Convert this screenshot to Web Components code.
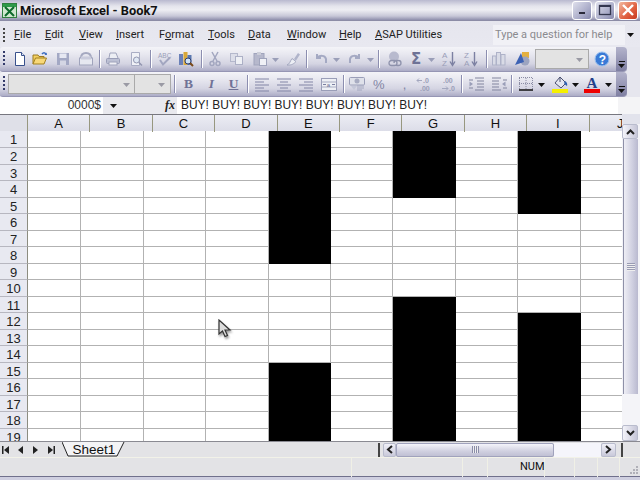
<!DOCTYPE html>
<html><head><meta charset="utf-8"><title>Excel</title>
<style>
html,body{margin:0;padding:0;background:#e6e6ee;}
body{width:640px;height:480px;overflow:hidden;font-family:"Liberation Sans",Arial,sans-serif;display:flex;flex-direction:column;}
</style></head><body>
<xl-title></xl-title>
<xl-menu></xl-menu>
<xl-toolbar set="one"></xl-toolbar>
<xl-toolbar set="two"></xl-toolbar>
<xl-formula></xl-formula>
<xl-sheet></xl-sheet>
<xl-tabs></xl-tabs>
<xl-status></xl-status>
<script>
const ICONS={
new:'<path d="M3.5 1.5h6l3 3v10h-9z" fill="#fff" stroke="#38508c"/><path d="M9.5 1.5v3h3" fill="#dfe6f6" stroke="#38508c"/>',
open:'<path d="M1 13V4h5l1 1.500h5v2" fill="#f3d063" stroke="#9c7a20"/><path d="M1 13l2.500-6h11L12 13z" fill="#f8d878" stroke="#a2801f"/><path d="M10 3q2-2.500 4 0" fill="none" stroke="#3c6cc0" stroke-width="1.500"/><path d="M12.500 4l2.500 0-.5-2.500z" fill="#3c6cc0"/>',
save:'<rect x="2" y="2" width="12" height="12" fill="#a3a8c4"/><rect x="4.500" y="2.500" width="7" height="4.500" fill="#e6e8f2"/><rect x="5" y="9.500" width="6" height="4.500" fill="#d4d6e4"/>',
perm:'<path d="M3 7q0-5 5-5t5 5" fill="none" stroke="#a4a8c0" stroke-width="2"/><rect x="1.500" y="7" width="13" height="7" fill="#e6e8f0" stroke="#a0a4bc"/><rect x="3" y="5.500" width="10" height="3" fill="#c9cbdc"/>',
print:'<path d="M4 7l1-5h6l2 5" fill="#eceef4" stroke="#a0a4bc"/><rect x="1.500" y="7.500" width="13" height="5" rx="1" fill="#bcc0d4" stroke="#9a9eb8"/><rect x="4" y="11" width="8" height="3" fill="#f0f0f5" stroke="#a0a4bc"/>',
prev:'<path d="M3.500 1.500h8v13h-8z" fill="#f0f1f6" stroke="#a9adc4"/><circle cx="8.500" cy="9" r="3" fill="#e0e8f4" stroke="#9296b0"/><path d="M11 11.500l3 3" stroke="#9296b0" stroke-width="1.500"/>',
spell:'<text x="1" y="7" font-size="6.500" font-family="Liberation Sans" fill="#9a9eb8">ABC</text><path d="M3 9l3 4.500 7-7" fill="none" stroke="#a2a6c0" stroke-width="2"/>',
res:'<rect x="1" y="3" width="4" height="11" fill="#6a80b8"/><rect x="5.500" y="1" width="4" height="13" fill="#d8a838"/><rect x="9.500" y="4" width="4" height="10" fill="#5a78b0"/><circle cx="10" cy="10" r="3" fill="#cfe2f4" stroke="#2c3e72"/><path d="M12 12l3 3" stroke="#7a4a18" stroke-width="2"/>',
cut:'<path d="M5 1l5 9M11 1L6 10" stroke="#a2a6bf" stroke-width="1.500"/><circle cx="5" cy="12.500" r="2" fill="none" stroke="#a2a6bf" stroke-width="1.500"/><circle cx="11" cy="12.500" r="2" fill="none" stroke="#a2a6bf" stroke-width="1.500"/>',
copy:'<rect x="1.500" y="2.500" width="7" height="8" fill="#dcdee9" stroke="#b4b8cc"/><rect x="6.500" y="5.500" width="7" height="8" fill="#eef0f5" stroke="#acb0c6"/>',
paste:'<rect x="2" y="2.500" width="10" height="11.500" fill="#b6b8cc" stroke="#a0a4bc"/><rect x="5" y="1" width="4" height="3" fill="#ccced9"/><rect x="7.500" y="7.500" width="7" height="7" fill="#f0f1f6" stroke="#a0a4bc"/>',
paint:'<path d="M9 8l4-6 2 1.500-4 6z" fill="#b0b4ca"/><path d="M2 14c3-1 3-4 5-6.500l4 3c-2 2-4 4-9 3.500z" fill="#eceef4" stroke="#a4a8c0"/>',
undo:'<path d="M4 3v4h4M4 7c3-3 8-3 9 1v4" fill="none" stroke="#a4a9c3" stroke-width="2"/>',
redo:'<path d="M12 3v4H8M12 7C9 4 4 4 3 8v4" fill="none" stroke="#a4a9c3" stroke-width="2"/>',
link:'<circle cx="8" cy="5.500" r="5" fill="#b8bace"/><path d="M3 12a2.500 2.500 0 0 1 2.500-2.500h3a2.500 2.500 0 0 1 0 5h-3A2.500 2.500 0 0 1 3 12zM8 12a2.500 2.500 0 0 1 2.500-2.500h2a2.500 2.500 0 0 1 0 5h-2" fill="none" stroke="#8e92ac" stroke-width="1.300"/>',
sigma:'<text x="3" y="13" font-size="15" font-weight="bold" font-family="DejaVu Sans" fill="#6e7296">Σ</text>',
az:'<text x="1" y="7" font-size="8" font-family="Liberation Sans" fill="#9a9eb8">A</text><text x="1" y="15" font-size="8" font-family="Liberation Sans" fill="#9a9eb8">Z</text><path d="M11.500 1v12M9 10.500l2.500 4 2.500-4" fill="none" stroke="#7c80a2" stroke-width="1.400"/>',
za:'<text x="1" y="7" font-size="8" font-family="Liberation Sans" fill="#9a9eb8">Z</text><text x="1" y="15" font-size="8" font-family="Liberation Sans" fill="#9a9eb8">A</text><path d="M11.500 1v12M9 10.500l2.500 4 2.500-4" fill="none" stroke="#7c80a2" stroke-width="1.400"/>',
chart:'<rect x="1.500" y="5" width="3.500" height="9" fill="#d9dbe6" stroke="#aeb2c8"/><rect x="5.500" y="1.500" width="4" height="12.500" fill="#d9dbe6" stroke="#aeb2c8"/><rect x="10" y="3.500" width="4" height="10.500" fill="#d9dbe6" stroke="#aeb2c8"/>',
draw:'<rect x="8" y="1" width="7" height="6" fill="#e4b040"/><circle cx="11" cy="10" r="4.500" fill="#9ca4c0"/><path d="M1 14L7 2l3 9z" fill="#3d62b4"/>',
help:'<circle cx="8" cy="8" r="7" fill="#3a7ad6" stroke="#9cc2f0"/><text x="4.700" y="12.500" font-size="12" font-weight="bold" font-family="Liberation Sans" fill="#fff">?</text>',
left:'<path d="M1 3h14M1 6h9M1 9h14M1 12h9M1 15h14" stroke="#8285a6"/>',
center:'<path d="M1 3h14M4 6h8M1 9h14M4 12h8M1 15h14" stroke="#8285a6"/>',
right:'<path d="M1 3h14M6 6h9M1 9h14M6 12h9M1 15h14" stroke="#8285a6"/>',
merge:'<rect x=".5" y="2.500" width="15" height="12" fill="#eef0f5" stroke="#9a9eb8"/><path d="M.5 6h15M.5 11h15" stroke="#a8acc2"/><path d="M2 8.500h3M14 8.500h-3" stroke="#7c80a2"/><text x="5.800" y="10.500" font-size="6" font-family="Liberation Sans" fill="#6e7296">a</text>',
money:'<rect x=".5" y="1.500" width="15" height="7.500" rx="1" fill="#dfe1ea" stroke="#9a9eb8"/><circle cx="8" cy="5" r="2.500" fill="#a8acc2"/><path d="M8 10h7M8 12h7M8 14h5" stroke="#a4a8c0"/><path d="M2 10l3 4 3-4" fill="#c4c7d8"/>',
incd:'<text x="7" y="7" font-size="7" font-weight="bold" font-family="Liberation Sans" fill="#9a9eb8">.0</text><text x="4" y="15" font-size="7" font-weight="bold" font-family="Liberation Sans" fill="#9a9eb8">.00</text><path d="M6 4.500H1M3 2.500l-2 2 2 2" fill="none" stroke="#a4a8c0"/>',
decd:'<text x="3" y="7" font-size="7" font-weight="bold" font-family="Liberation Sans" fill="#9a9eb8">.00</text><text x="9" y="15" font-size="7" font-weight="bold" font-family="Liberation Sans" fill="#9a9eb8">.0</text><path d="M2 12.500h6M6 10.500l2 2-2 2" fill="none" stroke="#a4a8c0"/>',
ind:'<path d="M7 2h9M9 5h7M9 8h7M9 11h7M7 14h9M1 4h4M1 12h4" stroke="#82859f"/><path d="M5 8L1.500 5.500v5z" fill="#9a9eb8"/>',
out:'<path d="M1 2h9M1 5h7M1 8h7M1 11h7M1 14h9M12 4h4M12 12h4" stroke="#82859f"/><path d="M11 8l3.500-2.500v5z" fill="#9a9eb8"/>',
border:'<path d="M1.500 2v11M8 2v11M14.500 2v11M1 1.500h14M1 7.500h14" stroke="#8a8ca4" stroke-dasharray="1 1"/><path d="M1 14h14" stroke="#111" stroke-width="1.500"/>',
fill:'<path d="M3 8l5-6 6 6-5 5z" fill="#e4e6f0" stroke="#4a5070"/><path d="M8 2V7" stroke="#4a5070"/><path d="M13 6q3 2 2 5-2-1-3-3z" fill="#3060b0"/><rect y="14" width="16" height="4" fill="#f5f000"/>',
color:'<text x="2.500" y="12.500" font-size="15" font-weight="bold" font-family="Liberation Serif" fill="#23408a">A</text><rect y="14" width="16" height="4" fill="#ee0000"/>'
};
function shadow(el,html){el.attachShadow({mode:'open'}).innerHTML=html;}
class XlIcon extends HTMLElement{connectedCallback(){
 const n=this.getAttribute('name'),w=this.getAttribute('w')||16,h=n==='fill'||n==='color'?18:16;
 shadow(this,`<style>:host{display:block;flex:none;line-height:0}</style><svg width="${w}" height="${h}" viewBox="0 0 16 ${h}">${ICONS[n]||''}</svg>`);
}}
customElements.define('xl-icon',XlIcon);
class XlCaret extends HTMLElement{connectedCallback(){
 const c=this.getAttribute('color')||'#111';
 shadow(this,`<style>:host{display:block;flex:none;line-height:0}</style><svg width="7" height="4" viewBox="0 0 7 4"><path d="M0 0h7L3.500 4z" fill="${c}"/></svg>`);
}}
customElements.define('xl-caret',XlCaret);
class XlTitle extends HTMLElement{connectedCallback(){shadow(this,`<style>
:host{display:flex;align-items:center;flex:none;height:21px;box-sizing:border-box;padding:0 2px 0 2px;background:linear-gradient(#b9b9cf 0,#e4e4ec 30%,#eeeef3 50%,#c8c8d8 80%,#8f8fac 100%);border-bottom:1px solid #8c8ca6}
.t{font:bold 12.800px Roboto,"Liberation Sans",sans-serif;color:#111;margin-left:3px;white-space:nowrap}
.sp{flex:1}
.b{width:20px;height:19px;box-sizing:border-box;border:1px solid #fff;border-radius:3px;margin-left:3px;background:linear-gradient(135deg,#dfe0ec,#a3a5c4 70%,#8688ac);display:flex;align-items:center;justify-content:center}
.x{background:linear-gradient(135deg,#f2b8a0,#e06040 60%,#c83a20)}
svg{display:block}
</style>
<svg width="15" height="15" viewBox="0 0 15 15"><rect x=".5" y=".5" width="14" height="14" fill="#cfe8cf" stroke="#2f7f3f"/><rect x="1" y="1" width="13" height="3" fill="#2f9a4a"/><path d="M3 4l9 9M12 4l-9 9" stroke="#0e6a2c" stroke-width="2"/></svg>
<span class="t">Microsoft Excel - Book7</span><span class="sp"></span>
<div class="b"><svg width="12" height="12"><rect x="3" y="8" width="6" height="2" fill="#2a2a3a"/></svg></div>
<div class="b"><svg width="14" height="14"><rect x="1.500" y="2.500" width="11" height="9" fill="none" stroke="#33364e" stroke-width="1.300"/><rect x="1" y="2" width="12" height="2" fill="#33364e"/></svg></div>
<div class="b x"><svg width="14" height="14"><path d="M2 2l10 10M12 2L2 12" stroke="#fff" stroke-width="2.400"/></svg></div>`);}}
customElements.define('xl-title',XlTitle);
class XlMenu extends HTMLElement{connectedCallback(){
 const it=[['F','ile'],['E','dit'],['V','iew'],['I','nsert'],['','F|o|rmat'],['T','ools'],['D','ata'],['W','indow'],['H','elp'],['A','SAP Utilities']];
 let html='';
 const w=[31,34,37,43,49,40,39,52,36,61];
 it.forEach((a,i)=>{let label=a[0]?`<u>${a[0]}</u>${a[1]}`:'F<u>o</u>rmat';html+=`<span style="width:${w[i]}px">${label}</span>`;});
 shadow(this,`<style>
:host{display:flex;align-items:center;flex:none;height:26px;box-sizing:border-box;padding-left:3px;padding-top:1px;background:linear-gradient(#e6e6ee,#e8e8f0);font:11px Roboto,"Liberation Sans",sans-serif;color:#222}
.g{width:2px;height:14px;margin-right:9px;background:repeating-linear-gradient(#444 0 2px,transparent 2px 4px)}
span{display:block;white-space:nowrap;flex:none}
.h{flex:none;width:132px;height:20px;background:#f1f1f6;color:#8a8a8e;font-size:11px;line-height:19px;padding-left:2px;box-sizing:border-box;white-space:nowrap}
.c{margin-left:2px}
u{text-decoration-thickness:1px}
</style><div class="g"></div>${html}<div class="h" style="margin-left:57px">Type a question for help</div><xl-caret class="c"></xl-caret>`);}}
customElements.define('xl-menu',XlMenu);
const SETS={
one:[['new',12],['open',32],['save',55],['perm',78],['|',99],['print',105],['prev',128],['|',150],['spell',157],['res',178],['|',201],['cut',207],['copy',229],['paste',252],['^',272],['paint',285],['|',306],['undo',313],['^',333],['redo',347],['^',367],['|',378],['link',386],['sigma',408],['^',428],['az',441],['za',463],['|',486],['chart',491],['draw',514],['#',535,54],['help',594]],
two:[['#',8,128],['#',134,37],['|',174],['B',183],['I',206],['U',228],['|',247],['left',254],['center',276],['right',298],['merge',321],['|',343],['money',349],['%',373],[',',399],['incd',416],['decd',440],['|',461],['ind',468],['out',491],['|',511],['border',518],['*',538],['fill',552],['*',572],['color',584],['*',605]]
};
class XlToolbar extends HTMLElement{connectedCallback(){
 const s=this.getAttribute('set'),items=SETS[s];let x=0,html='';
 const adv=(t,w)=>{const m=t-x;x=t+w;return m;};
 html+=`<div class="grip" style="margin-left:${adv(3,2)}px"></div>`;
 for(const it of items){const k=it[0],t=it[1];
  if(k==='|')html+=`<div class="sep" style="margin-left:${adv(t,2)}px"></div>`;
  else if(k==='^')html+=`<xl-caret color="#9a9eb8" style="margin-left:${adv(t,7)}px"></xl-caret>`;
  else if(k==='*')html+=`<xl-caret style="margin-left:${adv(t,7)}px"></xl-caret>`;
  else if(k==='#')html+=`<div class="combo" style="margin-left:${adv(t,it[2])}px;width:${it[2]}px"><xl-caret color="#9a9aa4"></xl-caret></div>`;
  else if(k==='B'||k==='I'||k==='U'){const st=k==='B'?'font-weight:bold':k==='I'?'font-style:italic;font-weight:bold':'font-weight:bold;text-decoration:underline';html+=`<span class="tx" style="margin-left:${adv(t,11)}px;${st}">${k}</span>`;}
  else if(k==='%'||k===','){html+=`<span class="tx pc" style="margin-left:${adv(t,11)}px">${k}</span>`;}
  else html+=`<xl-icon name="${k}" style="margin-left:${adv(t,16)}px"></xl-icon>`;
 }
 shadow(this,`<style>
:host{display:flex;align-items:center;flex:none;height:25px;width:627px;box-sizing:border-box;border-radius:3px 4px 4px 3px;background:linear-gradient(#f4f4f8 0,#e8e8f0 30%,#d4d4e2 70%,#acacc6 100%);position:relative;border-bottom:1px solid #9696b4}
.grip{width:2px;height:16px;flex:none;background:repeating-linear-gradient(#333a6a 0 2px,transparent 2px 4px)}
.sep{width:1px;height:18px;border-right:1px solid #fff;background:#8c8eb0;flex:none}
.combo{flex:none;height:20px;box-sizing:border-box;border:1px solid #aaaaaa;background:#e3e3e3;display:flex;align-items:center;justify-content:flex-end;padding-right:5px}
.tx{flex:none;width:11px;text-align:center;font:bold 13.500px "Liberation Serif",serif;color:#707296}
.pc{font:13px "Liberation Sans",sans-serif;color:#8285a4}
.chev{position:absolute;right:0;top:0;bottom:0;width:11px;border-radius:0 4px 4px 0;background:linear-gradient(#b4b4cc,#7f7fa2);display:flex;flex-direction:column;align-items:center;justify-content:flex-end;padding-bottom:3px;box-sizing:border-box}
.chev i{display:block;width:6px;height:1px;background:#111;margin-bottom:1px}
</style>${html}<div class="chev"><i></i><xl-caret></xl-caret></div>`);}}
customElements.define('xl-toolbar',XlToolbar);
class XlFormula extends HTMLElement{connectedCallback(){shadow(this,`<style>
:host{display:flex;flex:none;height:17px;align-items:stretch;background:#e9e9ee;font:11.950px "Liberation Sans",sans-serif;color:#222;line-height:17px}
.n{width:103px;background:#fff;text-align:right;padding-right:2px;box-sizing:border-box;flex:none;font-size:12px;color:#333}
.c{width:60px;display:flex;align-items:center;padding-left:7px;box-sizing:border-box;flex:none}
.fx{font:italic bold 12px "Liberation Serif",serif;width:14px;flex:none;padding-left:2px;box-sizing:border-box;line-height:17px}
.v{flex:none;width:441px;background:#fff;padding-left:4px;box-sizing:border-box;white-space:nowrap}
.e{flex:1;background:#f4f4f6}
</style><div class="n">0000$</div><div class="c"><xl-caret></xl-caret></div><div class="fx">fx</div><div class="v">BUY! BUY! BUY! BUY! BUY! BUY! BUY! BUY!</div><div class="e"></div>`);}}
customElements.define('xl-formula',XlFormula);
class XlSheet extends HTMLElement{connectedCallback(){
 const cols='ABCDEFGHIJ'.split('');
 let head='<div class="ch c0"></div>'+cols.map(c=>`<div class="ch">${c}</div>`).join('');
 const black={4:r=>r<=8||r>=15,6:r=>r<=4||r>=11,8:r=>r<=5||r>=12};
 let cells='';
 for(let r=1;r<=19;r++){
  cells+=`<div class="rh">${r}</div>`;
  for(let c=0;c<10;c++){
   const f=black[c];cells+=`<div class="${f&&f(r)?'cell k':'cell'}"></div>`;
  }
 }
 shadow(this,`<style>
:host{display:flex;flex:none;height:327px;position:relative;overflow:hidden;background:#fff}
.main{width:622px;flex:none;overflow:hidden}
.hd{display:grid;grid-template-columns:28px repeat(10,62.400px);height:17px;box-sizing:border-box;border-top:1px solid #77777f;background:linear-gradient(#ecedf4,#dcdde8);font:13px "Liberation Sans",sans-serif;color:#111;width:660px}
.ch{border-right:1px solid #97977f;text-align:center;line-height:17px;box-sizing:border-box}
.c0{background:#dfe0e8}
.gr{display:grid;grid-template-columns:28px 53.400px repeat(8,62.400px) 42px;grid-template-rows:17px repeat(18,16.500px);height:310px;overflow:hidden}
.rh{background:#e8e9f1;border-right:1px solid #8c8c80;border-bottom:1px solid #b7b7c0;box-sizing:border-box;text-align:center;font:13px "Liberation Sans",sans-serif;color:#222;line-height:18px;grid-column:1}
.cell{border-right:1px solid #b2b2b2;border-bottom:1px solid #b2b2b2;box-sizing:border-box}
.cell.k{background:#000;border-color:#000}
.v{width:18px;flex:none;background:#f4f4f8;box-sizing:border-box;display:flex;flex-direction:column;padding-right:2px;align-items:stretch}
.btn{height:15px;flex:none;box-sizing:border-box;border:1px solid #b9bccd;border-radius:2px;background:linear-gradient(90deg,#f3f3f9,#c6c6d8);display:flex;align-items:center;justify-content:center}
.th{height:255px;flex:none;background:linear-gradient(90deg,#eeeef5,#cfcfe0 60%,#b9b9cf);display:flex;align-items:center;justify-content:center;border-left:1px solid #8e90a8;margin-left:1px}
.tr{flex:1}
.gp{width:8px;height:8px;background:repeating-linear-gradient(#9a9cb4 0 1px,#eee 1px 2px)}
.top{height:10px;flex:none;background:#e2e3ec;margin:0 -2px 0 0}
svg{display:block}
.cur{position:absolute;left:218px;top:205px;filter:drop-shadow(1px 2px 1px rgba(0,0,0,.4))}
</style>
<div class="main"><div class="hd">${head}</div><div class="gr">${cells}</div></div>
<div class="v"><div class="top"></div>
<div class="btn"><svg width="9" height="6"><path d="M1 5l3.500-3.500L8 5" fill="none" stroke="#222" stroke-width="2"/></svg></div>
<div class="th"><div class="gp"></div></div><div class="tr"></div>
<div class="btn" style="height:16px"><svg width="9" height="6"><path d="M1 1l3.500 3.500L8 1" fill="none" stroke="#222" stroke-width="2"/></svg></div></div>
<svg class="cur" width="14" height="20" viewBox="0 0 14 20"><path d="M1 1v14l3.500-3 2.500 5.500 2.500-1-2.500-5.500h5z" fill="#dcdcdc" stroke="#333" stroke-width="1.200"/></svg>`);}}
customElements.define('xl-sheet',XlSheet);
class XlTabs extends HTMLElement{connectedCallback(){shadow(this,`<style>
:host{display:flex;flex:none;align-items:center;height:16px;background:#e3e3e6;border-top:1px solid #8a8a92;box-sizing:border-box;position:relative}
.nav{display:flex;width:62px;flex:none;height:100%;align-items:center;gap:9px;padding-left:2px;box-sizing:border-box;background:#e3e3e6}
svg{display:block;flex:none}
.tab{position:relative;width:64px;height:15px;flex:none;font:13.500px/15px "Liberation Sans",sans-serif;color:#111;text-align:center;box-sizing:border-box;padding-left:0}
.tab svg{position:absolute;left:0;top:0;z-index:0}
.tab span{position:relative}
.sp{width:252px;flex:none}
.split{width:2px;height:14px;background:#444;flex:none;margin-right:3px}
.b{width:13px;height:14px;box-sizing:border-box;border:1px solid #b9bccd;border-radius:2px;background:linear-gradient(#f0f0f8,#c9c9da);display:flex;align-items:center;justify-content:center;flex:none}
.th{width:158px;height:14px;flex:none;box-sizing:border-box;border:1px solid #a0a2bc;border-radius:2px;background:linear-gradient(#f4f4fa,#d0d0e0 60%,#c0c0d4);display:flex;align-items:center;justify-content:center}
.gp{width:7px;height:7px;background:repeating-linear-gradient(90deg,#8a8ca8 0 1px,#eee 1px 2px)}
.tr{flex:none;width:47px;height:14px;background:#f5f5fb}
</style>
<div class="nav">
<svg width="7" height="8"><path d="M0 0h1.500v8H0zM7 0L2 4l5 4z" fill="#222"/></svg>
<svg width="6" height="8"><path d="M5 0L0 4l5 4z" fill="#222"/></svg>
<svg width="6" height="8"><path d="M0 0l5 4-5 4z" fill="#222"/></svg>
<svg width="7" height="8"><path d="M0 0l5 4-5 4zM5.500 0H7v8H5.500z" fill="#222"/></svg></div>
<div class="tab"><svg width="64" height="15"><path d="M0 0l6 14h49L62 0" fill="#f4f4f6" stroke="#222"/></svg><span>Sheet1</span></div>
<div class="sp"></div><div class="split"></div>
<div class="b"><svg width="7" height="9"><path d="M6 1L2 4.500 6 8" fill="none" stroke="#222" stroke-width="2"/></svg></div>
<div class="th"><div class="gp"></div></div><div class="tr"></div>
<div class="b" style="width:15px"><svg width="7" height="9"><path d="M1 1l4 3.500L1 8" fill="none" stroke="#222" stroke-width="2"/></svg></div>
<div class="split" style="margin:0 0 0 5px"></div>`);}}
customElements.define('xl-tabs',XlTabs);
class XlStatus extends HTMLElement{connectedCallback(){
 const w=[352,111,25,57,30,23,22];
 const txt=['','','','NUM','','',''];
 shadow(this,`<style>
:host{display:flex;flex:none;height:23px;box-sizing:border-box;background:#e3e3e6;border-top:1px solid #f2f2e8;border-bottom:3px solid #cfcfe0;box-shadow:inset 0 -1px 0 #70708c;align-items:stretch;font:11px Roboto,"Liberation Sans",sans-serif;color:#111;position:relative}
div{box-sizing:border-box;border-right:1px solid #f0f0e6;flex:none;line-height:18px;white-space:nowrap}
.grip{position:absolute;right:1px;bottom:2px;border:0;padding:0;line-height:0}
</style>${w.map((x,i)=>`<div style="width:${x}px;${txt[i]?'padding-left:32px':'padding-left:0'}">${txt[i]}</div>`).join('')}
<div class="grip" style="width:11px;height:11px"><svg width="11" height="11"><path d="M8 2h2v2H8zM5 5h2v2H5zM8 5h2v2H8zM2 8h2v2H2zM5 8h2v2H5zM8 8h2v2H8z" fill="#b0b0b8"/></svg></div>`);}}
customElements.define('xl-status',XlStatus);
</script>
</body></html>
